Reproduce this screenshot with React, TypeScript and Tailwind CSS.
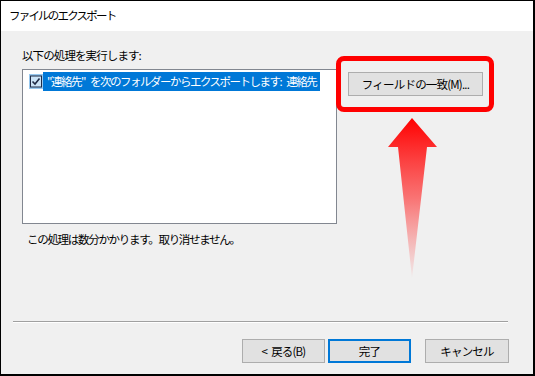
import React from "react";

const font = { fontFamily: '"Noto Sans CJK JP", "Noto Sans", sans-serif' };

const Sp: React.FC<{ w?: string }> = ({ w = "w-[5px]" }) => <span className={`inline-block ${w}`} />;

const WinButton: React.FC<{ primary?: boolean; className?: string; children: React.ReactNode }> = ({
  primary,
  className = "",
  children,
}) => (
  <div
    className={`flex items-center justify-center h-[24px] bg-[#e1e1e1] text-[11.5px] leading-[16px] tracking-[-0.8px] text-black whitespace-nowrap ${
      primary ? "border-2 border-[#0078d7]" : "border border-[#adadad]"
    } ${className}`}
  >
    {children}
  </div>
);

const CheckBox: React.FC = () => (
  <svg width="14" height="15" viewBox="0 0 14 15" className="shrink-0">
    <rect x="0" y="0" width="14" height="15" fill="#99c9ef" />
    <rect x="1.5" y="2" width="11" height="11" fill="#cce4f7" stroke="#1f2a44" strokeWidth="1" />
    <path d="M3.5 7.5 L6 10 L10.5 4.5" fill="none" stroke="#1f2a44" strokeWidth="1.6" />
  </svg>
);

const App: React.FC = () => {
  return (
    <div
      className="relative w-[535px] h-[376px] flex flex-col border-t border-l border-r-2 border-b-2 border-black bg-[#f0f0f0] text-black"
      style={font}
    >
      {/* title bar */}
      <div className="h-[30px] bg-white flex items-center pl-[8px] text-[11.5px] tracking-[-1.8px]">
        ファイルのエクスポート
      </div>

      {/* body */}
      <div className="flex-1 flex flex-col pt-[16px]">
        <div className="flex pl-[21px]">
          <div className="w-[315px] flex flex-col">
            <div className="h-[16px] leading-[16px] text-[11.5px] tracking-[-0.9px]">以下の処理を実行します:</div>
            <div className="mt-[6px] h-[155px] bg-white border border-[#828790] pt-[2px] pl-[6px]">
              <div className="flex items-center h-[19px]">
                <CheckBox />
                <div className="h-[19px] bg-[#0078d7] text-white text-[11.5px] leading-[19px] tracking-[-1.5px] pl-[4px] pr-[4px] whitespace-nowrap">
                  "連絡先"<Sp />を次のフォルダーからエクスポートします:<Sp />連絡先
                </div>
              </div>
            </div>
            <div className="mt-[7px] pl-[5px] h-[16px] leading-[16px] text-[11.5px] tracking-[-1.3px]">
              この処理は数分かかります。取り消せません。
            </div>
          </div>
          <div className="ml-[11px] pt-[25px]">
            <WinButton className="w-[135px]">フィールドの一致(M)...</WinButton>
          </div>
        </div>

        <div className="mt-auto ml-[12px] w-[495px] border-t border-[#a0a0a0] border-b border-b-white" />

        <div className="mt-[16px] mb-[11px] flex justify-end pr-[24px]">
          <WinButton className="w-[83px]">
            &lt;<Sp w="w-[4px]" />戻る(B)
          </WinButton>
          <WinButton primary className="w-[83px] ml-[3px]">
            完了
          </WinButton>
          <WinButton className="w-[84px] ml-[14px]">キャンセル</WinButton>
        </div>
      </div>

      {/* annotation: red frame */}
      <div className="absolute left-[335px] top-[55px] w-[158px] h-[56px] border-[5px] border-[#ff0000] rounded-[8px]" />

      {/* annotation: arrow */}
      <svg className="absolute left-[0px] top-[0px] pointer-events-none" width="535" height="376">
        <defs>
          <linearGradient id="arrowGrad" x1="0" y1="117" x2="0" y2="277" gradientUnits="userSpaceOnUse">
            <stop offset="0" stopColor="#ff0000" stopOpacity="1" />
            <stop offset="0.5" stopColor="#ff2020" stopOpacity="0.6" />
            <stop offset="1" stopColor="#ff4040" stopOpacity="0.05" />
          </linearGradient>
        </defs>
        <polygon
          points="411,117 436,146 426,146 411,277 397,146 387,146"
          fill="url(#arrowGrad)"
        />
      </svg>
    </div>
  );
};

export default App;
